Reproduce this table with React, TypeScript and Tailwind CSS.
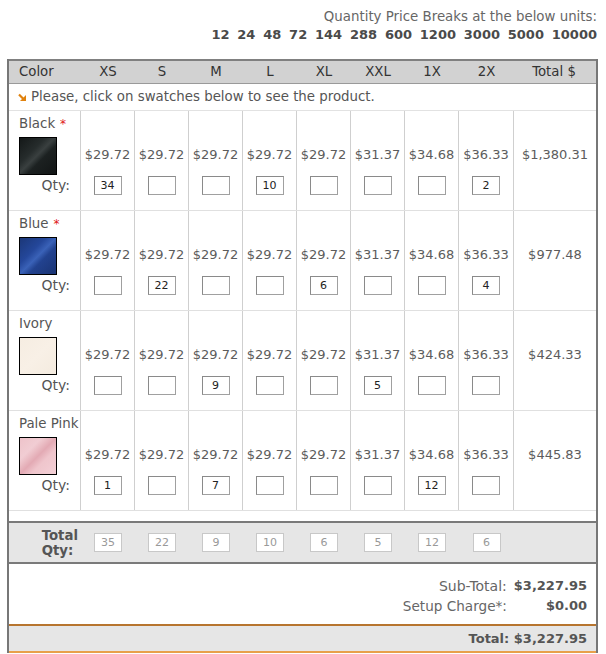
import React from "react";

const FONT = { fontFamily: '"DejaVu Sans", Verdana, sans-serif' };

type Row = {
  name: string;
  req: boolean;
  swatch: string;
  border: string;
  qty: string[];
  total: string;
};

const prices = ["$29.72", "$29.72", "$29.72", "$29.72", "$29.72", "$31.37", "$34.68", "$36.33"];
const sizes = ["XS", "S", "M", "L", "XL", "XXL", "1X", "2X"];
const widths = ["w-[54px]", "w-[54px]", "w-[54px]", "w-[54px]", "w-[54px]", "w-[54px]", "w-[54px]", "w-[55px]"];

const rows: Row[] = [
  {
    name: "Black",
    req: true,
    swatch: "linear-gradient(135deg,#141818 0%,#262c2c 35%,#3a4040 48%,#1c2121 60%,#121515 100%)",
    border: "#000",
    qty: ["34", "", "", "10", "", "", "", "2"],
    total: "$1,380.31",
  },
  {
    name: "Blue",
    req: true,
    swatch: "linear-gradient(135deg,#1b3778 0%,#24479a 35%,#3a62b8 50%,#22428f 62%,#1a3473 100%)",
    border: "#000",
    qty: ["", "22", "", "", "6", "", "", "4"],
    total: "$977.48",
  },
  {
    name: "Ivory",
    req: false,
    swatch: "linear-gradient(135deg,#f6ede2 0%,#f8f0e6 50%,#f4ebdf 100%)",
    border: "#000",
    qty: ["", "", "9", "", "", "5", "", ""],
    total: "$424.33",
  },
  {
    name: "Pale Pink",
    req: false,
    swatch: "linear-gradient(135deg,#eec3ca 0%,#f1cdd3 30%,#e3aab4 50%,#efc5cc 65%,#f3d0d6 100%)",
    border: "#000",
    qty: ["1", "", "7", "", "", "", "12", ""],
    total: "$445.83",
  },
];

const totals = ["35", "22", "9", "10", "6", "5", "12", "6"];

function QtyBox({ v, disabled }: { v: string; disabled?: boolean }) {
  return (
    <div
      className={
        disabled
          ? "w-[28px] h-[19px] border border-[#c8c8c8] bg-white text-[#999] text-[11px] leading-[17px] text-center"
          : "w-[28px] h-[19px] border border-[#a0a0a0] border-t-[#8a8a8a] border-l-[#8a8a8a] bg-white text-[#222] text-[11px] leading-[17px] text-center"
      }
    >
      {v}
    </div>
  );
}

function Arrow() {
  return (
    <svg width="9" height="9" viewBox="0 0 9 9" className="mr-[4px] mt-[1px]">
      <path d="M1 1.5 L6 6.5" stroke="#e0820e" strokeWidth="2.2" />
      <path d="M2 8 L8 8 L8 2 Z" fill="#e0820e" />
    </svg>
  );
}

export default function App() {
  return (
    <div className="w-[606px] h-[654px] bg-white text-[13px] text-[#555] overflow-hidden" style={FONT}>
      {/* Top price breaks */}
      <div className="pr-[9px] pt-[8px] h-[59px] flex flex-col items-end">
        <div className="leading-[18px] text-[#666] text-[13.35px]">Quantity Price Breaks at the below units:</div>
        <div className="leading-[17px] font-bold text-[#4a4a4a] flex gap-[7.8px]">
          {["12", "24", "48", "72", "144", "288", "600", "1200", "3000", "5000", "10000"].map((n) => (
            <span key={n}>{n}</span>
          ))}
        </div>
      </div>

      <div className="ml-[7px] w-[591px] border-x-2 border-[#777]">
        {/* Header */}
        <div className="flex h-[25px] bg-[#d2d2d2] border-t-2 border-[#808080] border-b border-b-[#9a9a9a] text-[#333] leading-[22px] text-[13.3px]">
          <div className="w-[72px] pl-[10px]">Color</div>
          {sizes.map((s, i) => (
            <div key={s} className={`${widths[i]} text-center`}>
              {s}
            </div>
          ))}
          <div className="w-[82px] text-center pr-[2px]">Total $</div>
        </div>

        {/* Notice */}
        <div className="h-[27px] flex items-center pl-[9px] border-b border-[#e2e2e2] text-[#555] text-[13.35px]">
          <Arrow />
          <span>Please, click on swatches below to see the product.</span>
        </div>

        {/* Rows */}
        {rows.map((r) => (
          <div key={r.name} className="flex h-[100px] border-b border-[#e0e0e0]">
            <div className="w-[72px] border-r border-[#cfcfcf] pl-[10px] pt-[4px] flex flex-col text-[13.35px]">
              <div className="leading-[18px] text-[#555]">
                {r.name}
                {r.req && <span className="text-[#e01515] ml-[5px] text-[12px] align-top">*</span>}
              </div>
              <div
                className="w-[38px] h-[38px] mt-[4px] border"
                style={{ background: r.swatch, borderColor: r.border }}
              />
              <div className="self-end pr-[10px] leading-[18px] mt-[1px] text-[#555] text-[14px]">Qty:</div>
            </div>
            {prices.map((p, i) => (
              <div
                key={i}
                className={`${widths[i]} border-r border-[#cfcfcf] flex flex-col items-center pt-[35px]`}
              >
                <div className="leading-[18px] text-[#5c5c5c]">{p}</div>
                <div className="mt-[12px]">
                  <QtyBox v={r.qty[i]} />
                </div>
              </div>
            ))}
            <div className="w-[82px] flex justify-center pt-[35px]">
              <div className="leading-[18px] text-[#5c5c5c]">{r.total}</div>
            </div>
          </div>
        ))}

        {/* gap */}
        <div className="h-[10px]" />

        {/* Total qty row */}
        <div className="flex h-[43px] bg-[#e6e6e6] border-y-2 border-[#7a7a7a]">
          <div className="w-[72px] flex items-center justify-end pr-[3px]">
            <div className="font-bold text-[#555] leading-[15px] text-left text-[13.3px]">
              Total
              <br />
              Qty:
            </div>
          </div>
          {totals.map((t, i) => (
            <div key={i} className={`${widths[i]} flex items-center justify-center`}>
              <QtyBox v={t} disabled />
            </div>
          ))}
          <div className="w-[82px]" />
        </div>

        {/* Subtotal */}
        <div className="h-[60px] pr-[9px] pt-[12px] flex flex-col items-end text-[#666]">
          <div className="leading-[20px] flex">
            <span className="text-[14px]">Sub-Total:</span>
            <span className="font-bold text-[#555] ml-[7px]">$3,227.95</span>
          </div>
          <div className="leading-[20px] flex">
            <span className="text-[13.6px]">Setup Charge*:</span>
            <span className="font-bold text-[#555] ml-[39px]">$0.00</span>
          </div>
        </div>

        {/* Total */}
        <div className="h-[29px] bg-[#e6e6e6] border-t-2 border-t-[#b7752f] border-b-2 border-b-[#e8a04a] flex items-center justify-end pr-[9px] font-bold text-[#555]">
          Total: $3,227.95
        </div>
      </div>
    </div>
  );
}
